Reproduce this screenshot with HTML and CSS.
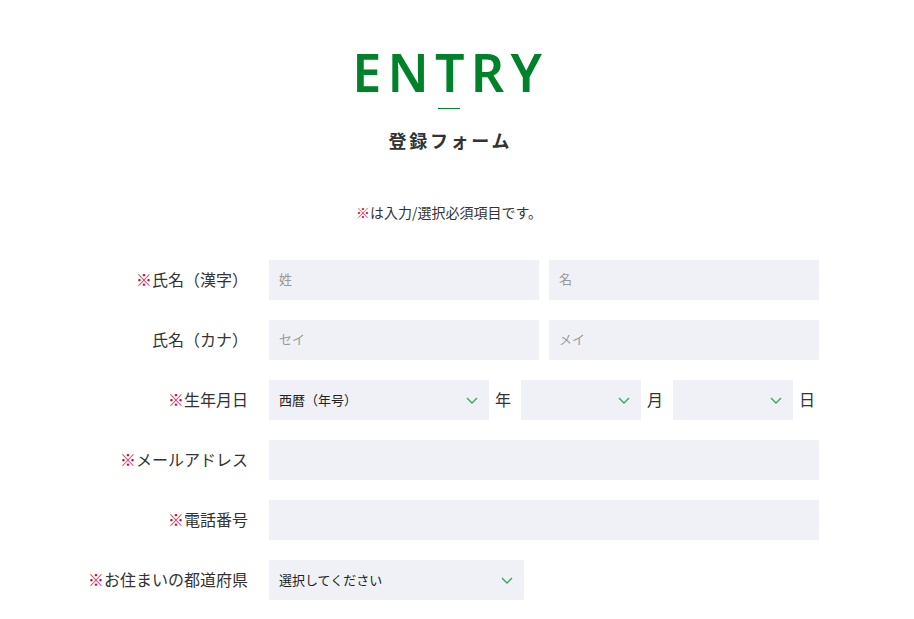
FILE: index.html
```html
<!DOCTYPE html>
<html lang="ja">
<head>
<meta charset="utf-8">
<title>ENTRY 登録フォーム</title>
<link rel="stylesheet" href="styles.css">
</head>
<body>
<div class="page">
  <header class="head">
    <h1 class="title">ENTRY</h1>
    <span class="rule"></span>
    <h2 class="subtitle">登録フォーム</h2>
  </header>
  <p class="note"><span class="req">※</span>は入力/選択必須項目です。</p>
  <form class="form">
    <div class="row">
      <label class="label"><span class="req">※</span>氏名（漢字）</label>
      <div class="fields pair">
        <input class="input" type="text" placeholder="姓">
        <input class="input" type="text" placeholder="名">
      </div>
    </div>
    <div class="row">
      <label class="label">氏名（カナ）</label>
      <div class="fields pair">
        <input class="input" type="text" placeholder="セイ">
        <input class="input" type="text" placeholder="メイ">
      </div>
    </div>
    <div class="row">
      <label class="label"><span class="req">※</span>生年月日</label>
      <div class="fields date">
        <div class="select era"><span class="val">西暦（年号）</span><svg class="chev" viewBox="0 0 12 7"><path d="M1 1l5 5 5-5" fill="none" stroke="#3aa65a" stroke-width="1.4"/></svg></div>
        <span class="unit">年</span>
        <div class="select small"><span class="val"></span><svg class="chev" viewBox="0 0 12 7"><path d="M1 1l5 5 5-5" fill="none" stroke="#3aa65a" stroke-width="1.4"/></svg></div>
        <span class="unit">月</span>
        <div class="select small"><span class="val"></span><svg class="chev" viewBox="0 0 12 7"><path d="M1 1l5 5 5-5" fill="none" stroke="#3aa65a" stroke-width="1.4"/></svg></div>
        <span class="unit">日</span>
      </div>
    </div>
    <div class="row">
      <label class="label"><span class="req">※</span>メールアドレス</label>
      <div class="fields">
        <input class="input full" type="text">
      </div>
    </div>
    <div class="row">
      <label class="label"><span class="req">※</span>電話番号</label>
      <div class="fields">
        <input class="input full" type="text">
      </div>
    </div>
    <div class="row">
      <label class="label"><span class="req">※</span>お住まいの都道府県</label>
      <div class="fields">
        <div class="select pref"><span class="val">選択してください</span><svg class="chev" viewBox="0 0 12 7"><path d="M1 1l5 5 5-5" fill="none" stroke="#3aa65a" stroke-width="1.4"/></svg></div>
      </div>
    </div>
  </form>
</div>
</body>
</html>
```
FILE: styles.css
```css
* { box-sizing: border-box; }
html, body { margin: 0; padding: 0; background: #fff; }
body {
  font-family: "Noto Sans CJK JP", "Noto Sans", sans-serif;
  color: #333;
  overflow: hidden;
}
.page {
  width: 898px;
  padding-top: 42px;
}
.head {
  display: flex;
  flex-direction: column;
  align-items: center;
}
.title {
  margin: 0;
  font-family: "Noto Sans", "Noto Sans CJK JP", sans-serif;
  font-weight: 600;
  font-size: 52px;
  line-height: 60px;
  letter-spacing: 0.12em;
  padding-left: 0.12em;
  margin-left: -4px;
  color: #00822b;
}
.rule {
  display: block;
  width: 22px;
  height: 1px;
  background: #00822b;
  margin-top: 6px;
}
.subtitle {
  margin: 18px 0 0;
  font-size: 18px;
  line-height: 26px;
  font-weight: 700;
  letter-spacing: 0.15em;
  padding-left: 0.15em;
  color: #333;
}
.note {
  margin: 49px 0 0;
  text-align: center;
  font-size: 14px;
  line-height: 20px;
  color: #333;
}
.req { color: #e0002b; }
.form {
  width: 740px;
  margin: 38px auto 0 79px;
  display: flex;
  flex-direction: column;
  gap: 20px;
}
.row {
  display: grid;
  grid-template-columns: 190px 1fr;
  align-items: center;
}
.label {
  text-align: right;
  padding-right: 21px;
  padding-bottom: 3px;
  font-size: 16px;
  line-height: 24px;
  color: #333;
  white-space: nowrap;
}
.fields { display: flex; align-items: center; }
.pair { gap: 10px; }
.input {
  height: 40px;
  border: 0;
  outline: 0;
  background: #f0f1f6;
  padding: 0 10px 3px;
  font-family: inherit;
  font-size: 13px;
  color: #333;
}
.pair .input { width: 270px; }
.input.full { width: 550px; }
.input::placeholder { color: #999; }
.select {
  height: 40px;
  background: #f0f1f6;
  display: flex;
  align-items: center;
  justify-content: space-between;
  padding: 0 11px 2px 10px;
  font-size: 13px;
  color: #222;
}
.select.era { width: 220px; }
.select.small { width: 120px; }
.select.pref { width: 255px; }
.chev { width: 12px; height: 7px; display: block; margin-top: 2px; }
.unit {
  font-size: 16px;
  line-height: 24px;
  margin: 0 10px 3px 6px;
  color: #333;
}
.unit:last-child { margin-right: 0; }
```
